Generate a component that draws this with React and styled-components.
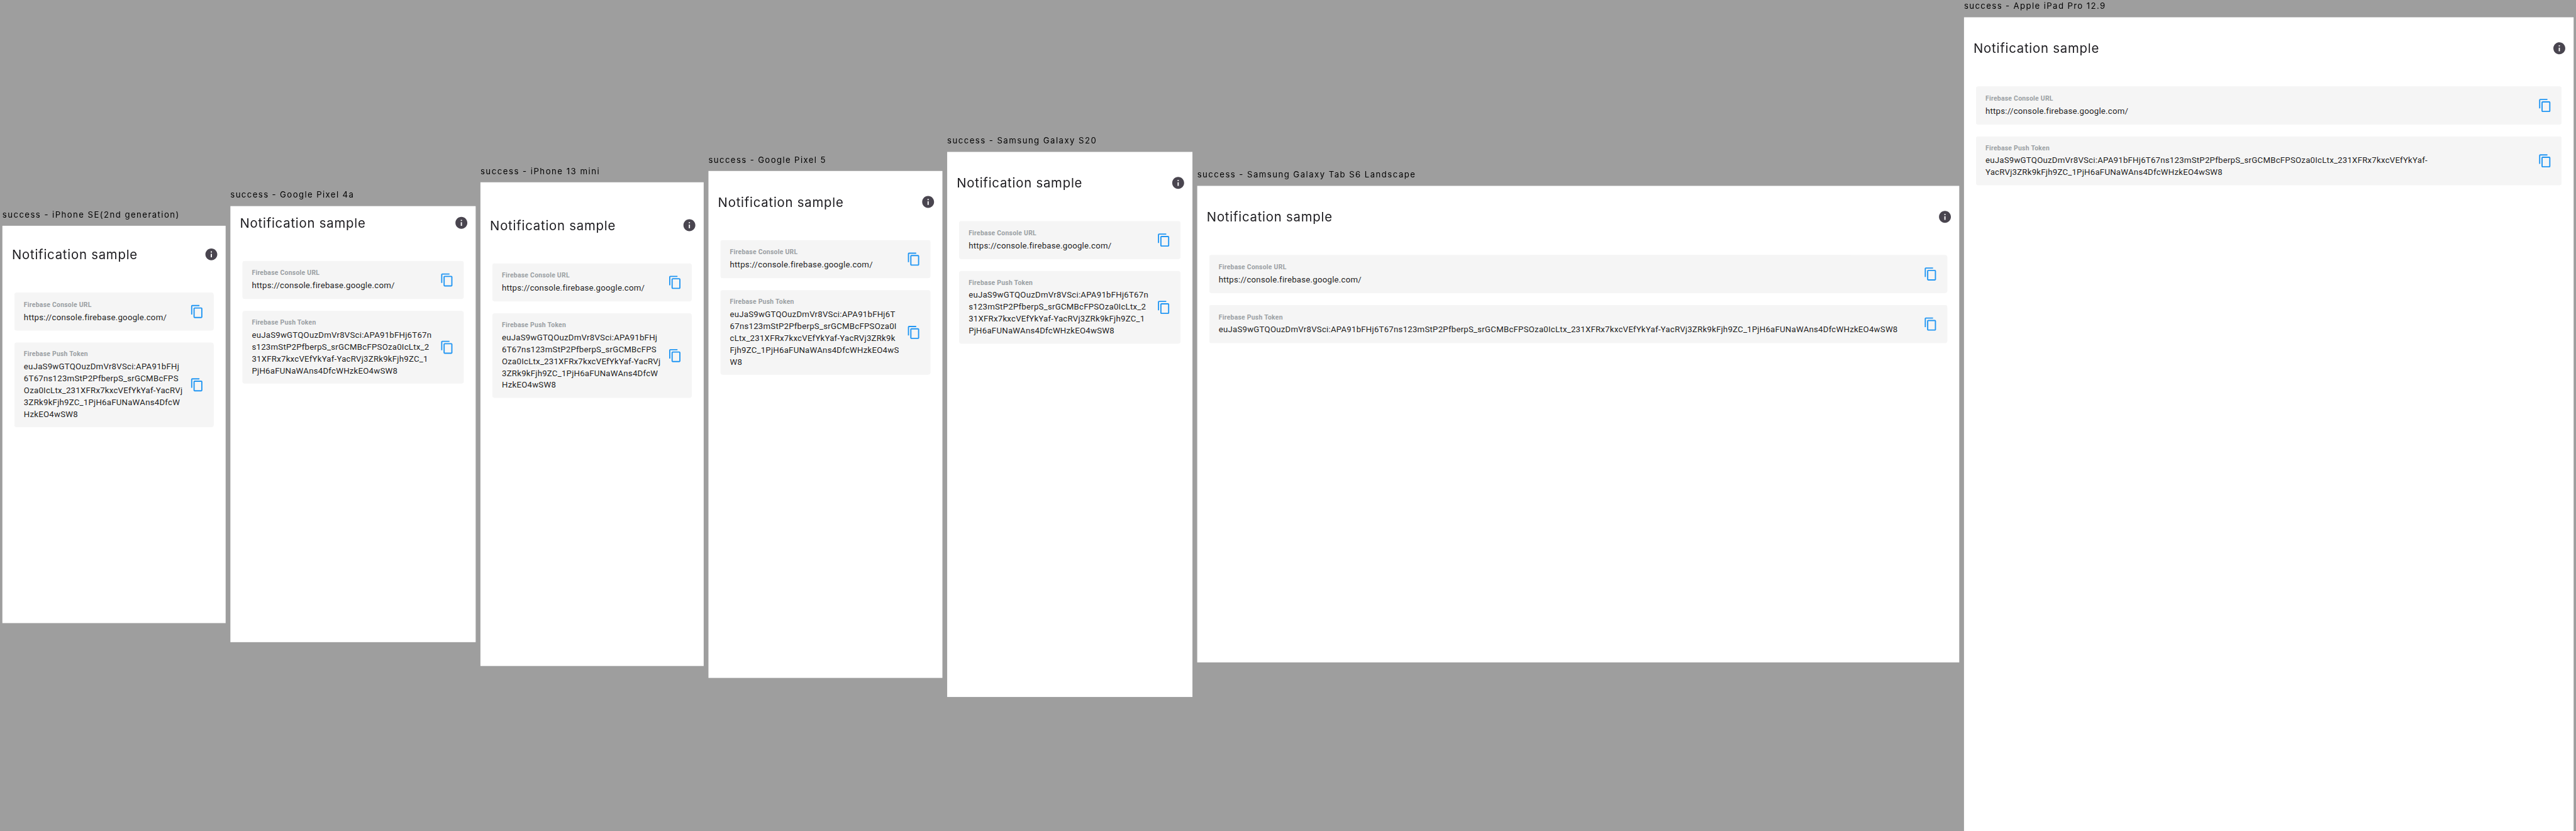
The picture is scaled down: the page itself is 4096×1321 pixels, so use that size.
import React from 'react';
import styled, { createGlobalStyle } from 'styled-components';

const GlobalStyle = createGlobalStyle`
  html,
  body {
    margin: 0;
    background: #9e9e9e;
    overflow: hidden;
  }

  #root {
    height: 100vh;
  }
`;

const Board = styled.main`
  transform: scale(${4096 / 4327}, ${1321 / 1395});
  transform-origin: 0 0;
  display: flex;
  align-items: center;
  gap: 8px;
  box-sizing: border-box;
  width: 4327px;
  height: 1395px;
  padding: 0 4px;
  font-family: Roboto, 'Liberation Sans', sans-serif;
`;

const Frame = styled.section`
  flex: none;
  width: ${({ $width }) => $width}px;
`;

const Caption = styled.h2`
  margin: 0;
  height: 29px;
  font: 400 14px/20px Inter, 'Liberation Sans', sans-serif;
  letter-spacing: ${({ $spacing }) => $spacing}px;
  white-space: nowrap;
  color: #000;
`;

const Screen = styled.div`
  box-sizing: border-box;
  height: ${({ $height }) => $height}px;
  padding-top: ${({ $statusBar }) => $statusBar}px;
  background: #fff;
`;

const AppBar = styled.header`
  display: flex;
  align-items: center;
  justify-content: space-between;
  box-sizing: border-box;
  height: 56px;
  padding: 0 12px 0 16px;
`;

const Title = styled.h1`
  margin: 0;
  font: 400 21.5px/28px Inter, 'Liberation Sans', sans-serif;
  letter-spacing: 0.8px;
  white-space: nowrap;
  color: #1c1b1f;
`;

const Icon = styled.svg`
  flex: none;
  width: 24px;
  height: 24px;
  fill: ${({ $color }) => $color};
`;

const Cards = styled.div`
  display: flex;
  flex-direction: column;
  gap: 20px;
  padding: 36px 20px 0;
`;

const Card = styled.article`
  display: flex;
  align-items: center;
  justify-content: space-between;
  box-sizing: border-box;
  min-height: 64px;
  padding: 12px 16px;
  border-radius: 4px;
  background: #f5f5f5;
`;

const Field = styled.div`
  display: flex;
  flex-direction: column;
  gap: 2px;
`;

const FieldLabel = styled.div`
  font-size: 11px;
  font-weight: 700;
  line-height: 16px;
  letter-spacing: 0.27px;
  white-space: nowrap;
  color: #9a9fa3;
`;

const FieldLine = styled.div`
  font-size: 14px;
  line-height: 20px;
  letter-spacing: 0.23px;
  white-space: nowrap;
  color: rgba(0, 0, 0, 0.9);
`;

const InfoIcon = () => (
  <Icon viewBox="0 0 24 24" $color="#49454f">
    <path d="M12 2C6.48 2 2 6.48 2 12s4.48 10 10 10 10-4.48 10-10S17.52 2 12 2zm1 15h-2v-6h2v6zm0-8h-2V7h2v2z" />
  </Icon>
);

const CopyIcon = () => (
  <Icon viewBox="0 0 24 24" $color="#2196f3">
    <path d="M16 1H4c-1.1 0-2 .9-2 2v14h2V3h12V1zm3 4H8c-1.1 0-2 .9-2 2v14c0 1.1.9 2 2 2h11c1.1 0 2-.9 2-2V7c0-1.1-.9-2-2-2zm0 16H8V7h11v14z" />
  </Icon>
);

const CopyCard = ({ label, lines }) => (
  <Card>
    <Field>
      <FieldLabel>{label}</FieldLabel>
      <div>
        {lines.map((line) => (
          <FieldLine key={line}>{line}</FieldLine>
        ))}
      </div>
    </Field>
    <CopyIcon />
  </Card>
);

const TOKEN =
  'euJaS9wGTQOuzDmVr8VSci:APA91bFHj6T67ns123mStP2PfberpS_srGCMBcFPSOza0IcLtx_231XFRx7kxcVEfYkYaf-YacRVj3ZRk9kFjh9ZC_1PjH6aFUNaWAns4DfcWHzkEO4wSW8';

// Splits the token so that each given fragment starts a new line.
const breakBefore = (...starts) => {
  const cuts = [0, ...starts.map((s) => TOKEN.indexOf(s)), TOKEN.length];
  return cuts.slice(1).map((end, i) => TOKEN.slice(cuts[i], end));
};

const narrow = breakBefore('6T67ns', 'Oza0Ic', '3ZRk9k', 'HzkEO4');
const medium = breakBefore('67ns123', 'cLtx_', 'Fjh9ZC', 'W8');
const wide = breakBefore('s123mSt', '31XFRx', 'PjH6aF');

const devices = [
  { name: 'iPhone SE(2nd generation)', width: 375, height: 667, statusBar: 20, spacing: 1.477, token: narrow },
  { name: 'Google Pixel 4a', width: 412, height: 732, statusBar: 0, spacing: 1.428, token: wide },
  { name: 'iPhone 13 mini', width: 375, height: 812, statusBar: 44, spacing: 1.543, token: narrow },
  { name: 'Google Pixel 5', width: 393, height: 851, statusBar: 24, spacing: 1.418, token: medium },
  { name: 'Samsung Galaxy S20', width: 412, height: 915, statusBar: 24, spacing: 1.492, token: wide },
  { name: 'Samsung Galaxy Tab S6 Landscape', width: 1280, height: 800, statusBar: 24, spacing: 1.491, token: [TOKEN] },
  { name: 'Apple iPad Pro 12.9', width: 1024, height: 1366, statusBar: 24, spacing: 1.425, token: breakBefore('YacRVj') },
];

export default function App() {
  return (
    <>
      <GlobalStyle />
      <Board>
        {devices.map((d) => (
          <Frame key={d.name} $width={d.width}>
            <Caption $spacing={d.spacing}>success - {d.name}</Caption>
            <Screen $height={d.height} $statusBar={d.statusBar}>
              <AppBar>
                <Title>Notification sample</Title>
                <InfoIcon />
              </AppBar>
              <Cards>
                <CopyCard label="Firebase Console URL" lines={['https://console.firebase.google.com/']} />
                <CopyCard label="Firebase Push Token" lines={d.token} />
              </Cards>
            </Screen>
          </Frame>
        ))}
      </Board>
    </>
  );
}
